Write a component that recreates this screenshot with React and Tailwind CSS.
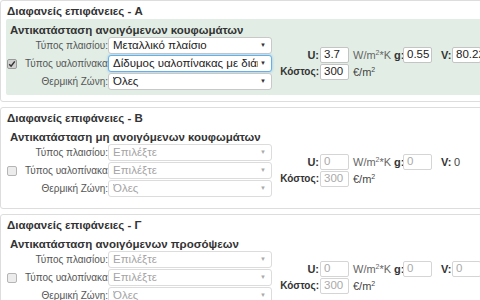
import React from 'react';

const font = { fontFamily: '"Liberation Sans", Arial, sans-serif' };

const Checkbox = ({ checked }) => (
  <div
    className={
      'w-[10px] h-[10px] rounded-[2px] border flex items-center justify-center ' +
      (checked ? 'bg-[#d0d0d0] border-[#9a9a9a]' : 'bg-[#ececec] border-[#b5b5b5]')
    }
  >
    {checked && (
      <svg width="8" height="8" viewBox="0 0 8 8">
        <path d="M1.2 4.2 L3.1 6.2 L6.8 1.4" fill="none" stroke="#333" strokeWidth="1.5" />
      </svg>
    )}
  </div>
);

const Select = ({ value, disabled, focus }) => (
  <div
    className={
      'relative w-[164px] h-[17px] bg-white rounded-[3px] border flex items-center pl-[4px] pr-[13px] ' +
      (focus
        ? 'border-[#66afe9] shadow-[0_0_3px_rgba(102,175,233,0.7)]'
        : disabled
        ? 'border-[#dcdcdc]'
        : 'border-[#c8c8c8]')
    }
  >
    <span
      className={
        'flex-1 min-w-0 overflow-hidden whitespace-nowrap text-[11.5px] leading-none ' +
        (disabled ? 'text-[#a5a5a5]' : 'text-[#222]')
      }
    >
      {value}
    </span>
    <span
      className={
        'absolute right-[5px] top-[4px] text-[6px] leading-none ' + (disabled ? 'text-[#aaa]' : 'text-[#333]')
      }
    >
      ▼
    </span>
  </div>
);

const NumInput = ({ value, disabled, className = '' }) => (
  <div
    className={
      'w-[29px] h-[16px] shrink-0 bg-white border rounded-[2px] flex items-center pl-[3px] text-[11.5px] leading-none ' +
      (disabled ? 'border-[#d5d5d5] text-[#aaa] ' : 'border-[#c4c4c4] text-[#222] ') +
      className
    }
  >
    {value}
  </div>
);

const Row = ({ label, children, checkbox, checked }) => (
  <div className="flex items-center h-[17px]">
    <div className="w-[102px] flex items-center">
      {checkbox && (
        <div className="w-[19px] shrink-0 pl-[1px]">
          <Checkbox checked={checked} />
        </div>
      )}
      <div className="flex-1 text-right whitespace-nowrap text-[10px] leading-none text-[#555]">{label}</div>
    </div>
    {children}
  </div>
);

const Panel = ({ title, sub, data }) => {
  const active = data.active;
  return (
    <div className="border border-[#dddddd] rounded-[3px] px-[5px] pt-[2px] pb-[6px] mb-[5px]">
      <div className="h-[16px] leading-[16px] text-[11.5px] font-bold text-[#333] pl-[1px]">{title}</div>
      <div className={'rounded-[2px] pt-[4px] pb-[5px] ' + (active ? 'bg-[#e2eee5]' : 'bg-white')}>
        <div className="h-[14px] leading-[14px] pl-[4px] text-[11.5px] font-bold text-[#333]">{sub}</div>
        <div className="flex items-center">
          <div className="flex flex-col gap-[1px]">
            <Row label="Τύπος πλαισίου:">
              <Select value={data.frame} disabled={!active} />
            </Row>
            <Row label="Τύπος υαλοπίνακα:" checkbox checked={active}>
              <Select value={data.glass} disabled={!active} focus={active} />
            </Row>
            <Row label="Θερμική Ζώνη:">
              <Select value="Όλες" disabled={!active} />
            </Row>
          </div>
          <div className="ml-[7px] flex flex-col gap-[1px] text-[11px] leading-none">
            <div className="flex items-center h-[16px]">
              <div className="w-[40px] shrink-0 text-right font-bold text-[#333]">U:</div>
              <NumInput value={data.u} disabled={!active} className="ml-[1px]" />
              <div className="ml-[4px] w-[38px] shrink-0 text-[#666] whitespace-nowrap">
                W/m<sup className="text-[7px]">2</sup>*K
              </div>
              <div className="ml-[3px] w-[9px] shrink-0 font-bold text-[#333]">g:</div>
              <NumInput value={data.g} disabled={!active} className="ml-[0px]" />
              <div className="ml-[9px] w-[10px] shrink-0 font-bold text-[#333]">V:</div>
              {data.vText ? (
                <div className="ml-[3px] text-[#444]">{data.vText}</div>
              ) : (
                <NumInput value={data.v} disabled={!active} className="ml-[1px]" />
              )}
            </div>
            <div className="flex items-center h-[16px]">
              <div className="w-[40px] shrink-0 text-right font-bold text-[10px] text-[#333] whitespace-nowrap">
                Κόστος:
              </div>
              <NumInput value="300" disabled={!active} className="ml-[1px]" />
              <div className="ml-[4px] text-[#444] whitespace-nowrap">
                €/m<sup className="text-[7px]">2</sup>
              </div>
            </div>
          </div>
        </div>
      </div>
    </div>
  );
};

const panels = [
  {
    title: 'Διαφανείς επιφάνειες - A',
    sub: 'Αντικατάσταση ανοιγόμενων κουφωμάτων',
    data: { active: true, frame: 'Μεταλλικό πλαίσιο', glass: 'Δίδυμος υαλοπίνακας με διάκενο', u: '3.7', g: '0.55', v: '80.22' },
  },
  {
    title: 'Διαφανείς επιφάνειες - B',
    sub: 'Αντικατάσταση μη ανοιγόμενων κουφωμάτων',
    data: { active: false, frame: 'Επιλέξτε', glass: 'Επιλέξτε', u: '0', g: '0', vText: '0' },
  },
  {
    title: 'Διαφανείς επιφάνειες - Γ',
    sub: 'Αντικατάσταση ανοιγόμενων προσόψεων',
    data: { active: false, frame: 'Επιλέξτε', glass: 'Επιλέξτε', u: '0', g: '0', v: '0' },
  },
];

export default function App() {
  return (
    <div className="w-[480px] h-[300px] overflow-hidden bg-white" style={font}>
      <div className="w-[540px]">
        {panels.map((p) => (
          <Panel key={p.title} title={p.title} sub={p.sub} data={p.data} />
        ))}
      </div>
    </div>
  );
}
